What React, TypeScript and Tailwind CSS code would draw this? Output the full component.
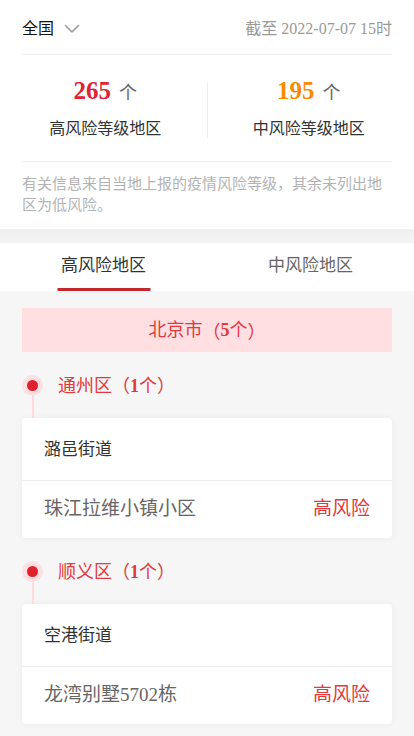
import React from "react";

type Place = { street: string; name: string };
type District = { name: string; count: number; places: Place[] };

const districts: District[] = [
  { name: "通州区", count: 1, places: [{ street: "潞邑街道", name: "珠江拉维小镇小区" }] },
  { name: "顺义区", count: 1, places: [{ street: "空港街道", name: "龙湾别墅5702栋" }] },
];

const FONT = { fontFamily: '"Liberation Serif", "Noto Sans CJK SC", serif' };
// full-width brackets centred in their cell
const PAREN = { fontFamily: '"Noto Sans CJK TC", sans-serif' };

function Chevron() {
  return (
    <svg width="16" height="10" viewBox="0 0 16 10" className="ml-[10px]">
      <polyline points="1.5,1.5 8,8 14.5,1.5" fill="none" stroke="#9a9a9a" strokeWidth="1.6" strokeLinecap="round" strokeLinejoin="round" />
    </svg>
  );
}

function Count({ n }: { n: number }) {
  return (
    <>
      <span style={PAREN}>（</span>
      <span className="font-bold">{n}</span>个<span style={PAREN}>）</span>
    </>
  );
}

function Stat({ value, color, label }: { value: number; color: string; label: string }) {
  return (
    <div className="flex-1 flex flex-col items-center">
      <div className="flex items-baseline h-[30px] leading-[30px]">
        <span className={`text-[25px] font-bold ${color}`}>{value}</span>
        <span className="ml-[8px] text-[18px] text-[#666]">个</span>
      </div>
      <div className="mt-[12px] text-[16px] leading-[22px] text-[#333]">{label}</div>
    </div>
  );
}

function DistrictBlock({ d }: { d: District }) {
  return (
    <div>
      <div className="relative flex items-center h-[66px]">
        <div className="w-[21px] h-[21px] rounded-full bg-[#fde0e2] flex items-center justify-center">
          <div className="w-[11px] h-[11px] rounded-full bg-[#e0202e]" />
        </div>
        <div className="ml-[15px] text-[18px] leading-[24px] text-[#e4393c]">
          {d.name}
          <Count n={d.count} />
        </div>
        <div className="absolute left-[10px] top-[43px] bottom-0 w-[2px] bg-[#ffd9dc]" />
      </div>
      {d.places.map((p) => (
        <div key={p.name} className="bg-white rounded-[4px] shadow-[0_0_8px_rgba(0,0,0,0.05)]">
          <div className="h-[63px] flex items-center px-[22px] pt-[2px] text-[17px] text-[#333] border-b border-[#eeeeee]">
            {p.street}
          </div>
          <div className="h-[57px] flex items-center justify-between px-[22px] text-[19px]">
            <span className="text-[#666]">{p.name}</span>
            <span className="text-[#e4393c]">高风险</span>
          </div>
        </div>
      ))}
    </div>
  );
}

export default function App() {
  return (
    <div className="min-h-screen bg-[#f6f6f6] w-[414px]" style={FONT}>
      <div className="bg-white px-[22px]">
        <div className="h-[54px] flex items-center justify-between pt-[4px]">
          <div className="flex items-center text-[16px] text-[#111]">
            全国
            <Chevron />
          </div>
          <div className="text-[16px] text-[#999]">截至 2022-07-07 15时</div>
        </div>
        <div className="h-px bg-[#eeeeee] shadow-[0_1px_2px_rgba(0,0,0,0.04)]" />
      </div>
      <div className="bg-white">
        <div className="flex items-center px-[4px] pt-[21px] pb-[21px]">
          <Stat value={265} color="text-[#e02232]" label="高风险等级地区" />
          <div className="w-px h-[55px] bg-[#eeeeee] mt-[4px]" />
          <Stat value={195} color="text-[#fd8a00]" label="中风险等级地区" />
        </div>
        <div className="mx-[22px] h-px bg-[#eeeeee]" />
        <p className="px-[22px] pt-[12px] pb-[13px] text-[15px] leading-[21px] text-[#b3b3b3]">
          有关信息来自当地上报的疫情风险等级，其余未列出地区为低风险。
        </p>
      </div>
      <div className="h-[14px] bg-gradient-to-b from-[#efefef] to-[#f4f4f4]" />
      <div className="bg-white flex h-[48px]">
        <div className="relative flex-1 flex items-center justify-center pb-[2px] text-[17px] text-[#333]">
          高风险地区
          <div className="absolute bottom-0 left-1/2 -translate-x-1/2 w-[93px] h-[3px] bg-[#c1272d]" />
        </div>
        <div className="flex-1 flex items-center justify-center pb-[2px] text-[17px] text-[#666]">中风险地区</div>
      </div>
      <div className="px-[22px] pt-[17px] pb-[20px]">
        <div className="h-[44px] bg-[#ffdfe1] flex items-center justify-center text-[18px] text-[#e4393c]">
          北京市
          <Count n={5} />
        </div>
        {districts.map((d) => (
          <DistrictBlock key={d.name} d={d} />
        ))}
      </div>
    </div>
  );
}
